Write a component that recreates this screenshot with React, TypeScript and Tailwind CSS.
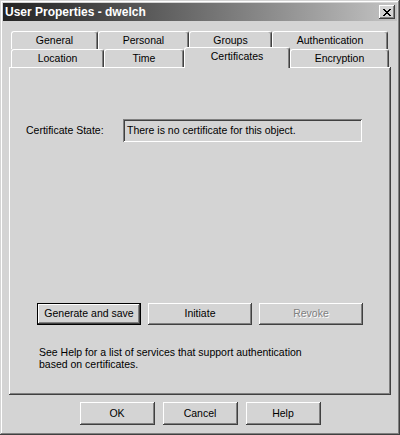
import React from 'react';

const font = { fontFamily: '"Liberation Sans", Arial, sans-serif' };

const Tab = ({ label, width, selected }: { label: string; width: string; selected?: boolean }) => (
  <div
    className={`${width} ${
      selected ? 'relative z-10 h-[21px] -mb-px pb-[3px]' : 'h-[18px]'
    } flex items-center justify-center rounded-t-[3px] border-l border-t border-white border-r border-r-[#404040] bg-[#d4d4d4] shadow-[inset_-1px_0_#808080] text-[10.5px] text-black`}
  >
    {label}
  </div>
);

const Button = ({
  label,
  width,
  height,
  isDefault,
  disabled,
}: {
  label: string;
  width: string;
  height: string;
  isDefault?: boolean;
  disabled?: boolean;
}) => (
  <button
    type="button"
    className={`${width} ${height} flex items-center justify-center bg-[#d4d4d4] text-[10.5px] ${
      isDefault
        ? 'border border-black shadow-[inset_-1px_-1px_#404040,inset_1px_1px_#ffffff,inset_-2px_-2px_#808080]'
        : 'shadow-[inset_-1px_-1px_#404040,inset_1px_1px_#ffffff,inset_-2px_-2px_#808080]'
    } ${disabled ? 'text-[#808080] [text-shadow:1px_1px_0_#ffffff]' : 'text-black'}`}
  >
    {label}
  </button>
);

export default function App() {
  return (
    <div
      style={font}
      className="flex h-[435px] w-[400px] flex-col bg-[#d4d4d4] p-[3px] shadow-[inset_-1px_-1px_#404040,inset_1px_1px_#d4d4d4,inset_-2px_-2px_#808080,inset_2px_2px_#ffffff]"
    >
      {/* title bar */}
      <div className="flex h-[18px] items-center justify-between bg-gradient-to-r from-[#242424] to-[#c4c4c4] pl-[2px] pr-[2px]">
        <span className="text-[12px] font-bold text-white">User Properties - dwelch</span>
        <button
          type="button"
          className="flex h-[14px] w-[16px] items-center justify-center bg-[#d4d4d4] shadow-[inset_-1px_-1px_#404040,inset_1px_1px_#ffffff,inset_-2px_-2px_#808080]"
        >
          <svg width="8" height="7" viewBox="0 0 8 7" shapeRendering="crispEdges">
            <path d="M0 0h2v1h-2zM6 0h2v1h-2zM1 1h2v1h-2zM5 1h2v1h-2zM2 2h4v1h-4zM3 3h2v1h-2zM2 4h4v1h-4zM1 5h2v1h-2zM5 5h2v1h-2zM0 6h2v1h-2zM6 6h2v1h-2z" fill="#000" />
          </svg>
        </button>
      </div>

      <div className="flex flex-col px-[6px]">
        {/* tabs */}
        <div className="mt-[10px] flex pl-[2px]">
          <Tab label="General" width="w-[87px]" />
          <Tab label="Personal" width="w-[91px]" />
          <Tab label="Groups" width="w-[83px]" />
          <Tab label="Authentication" width="w-[116px]" />
        </div>
        <div className="flex h-[18px] items-end pl-[2px]">
          <Tab label="Location" width="w-[93px]" />
          <Tab label="Time" width="w-[80px]" />
          <Tab label="Certificates" width="w-[106px]" selected />
          <Tab label="Encryption" width="w-[99px]" />
        </div>

        {/* panel */}
        <div className="flex h-[328px] flex-col shadow-[inset_-1px_-1px_#404040,inset_1px_1px_#ffffff,inset_-2px_-2px_#808080]">
          <div className="ml-[17px] mt-[52px] flex items-center text-[10.5px] text-black">
            <span className="w-[97px]">Certificate State:</span>
            <div className="flex h-[23px] w-[239px] items-start pl-[4px] pt-[4px] shadow-[inset_1px_1px_#808080,inset_-1px_-1px_#ffffff,inset_2px_2px_#404040,inset_-2px_-2px_#d4d4d4]">
              There is no certificate for this object.
            </div>
          </div>

          <div className="ml-[28px] mt-[161px] flex gap-[7px]">
            <Button label="Generate and save" width="w-[104px]" height="h-[22px]" isDefault />
            <Button label="Initiate" width="w-[104px]" height="h-[22px]" />
            <Button label="Revoke" width="w-[104px]" height="h-[22px]" disabled />
          </div>

          <p className="ml-[30px] mt-[21px] text-[10.5px] leading-[12px] text-black">
            See Help for a list of services that support authentication
            <br />
            based on certificates.
          </p>
        </div>

        {/* dialog buttons */}
        <div className="mt-[7px] flex justify-center gap-[8px]">
          <Button label="OK" width="w-[75px]" height="h-[23px]" />
          <Button label="Cancel" width="w-[75px]" height="h-[23px]" />
          <Button label="Help" width="w-[75px]" height="h-[23px]" />
        </div>
      </div>
    </div>
  );
}
